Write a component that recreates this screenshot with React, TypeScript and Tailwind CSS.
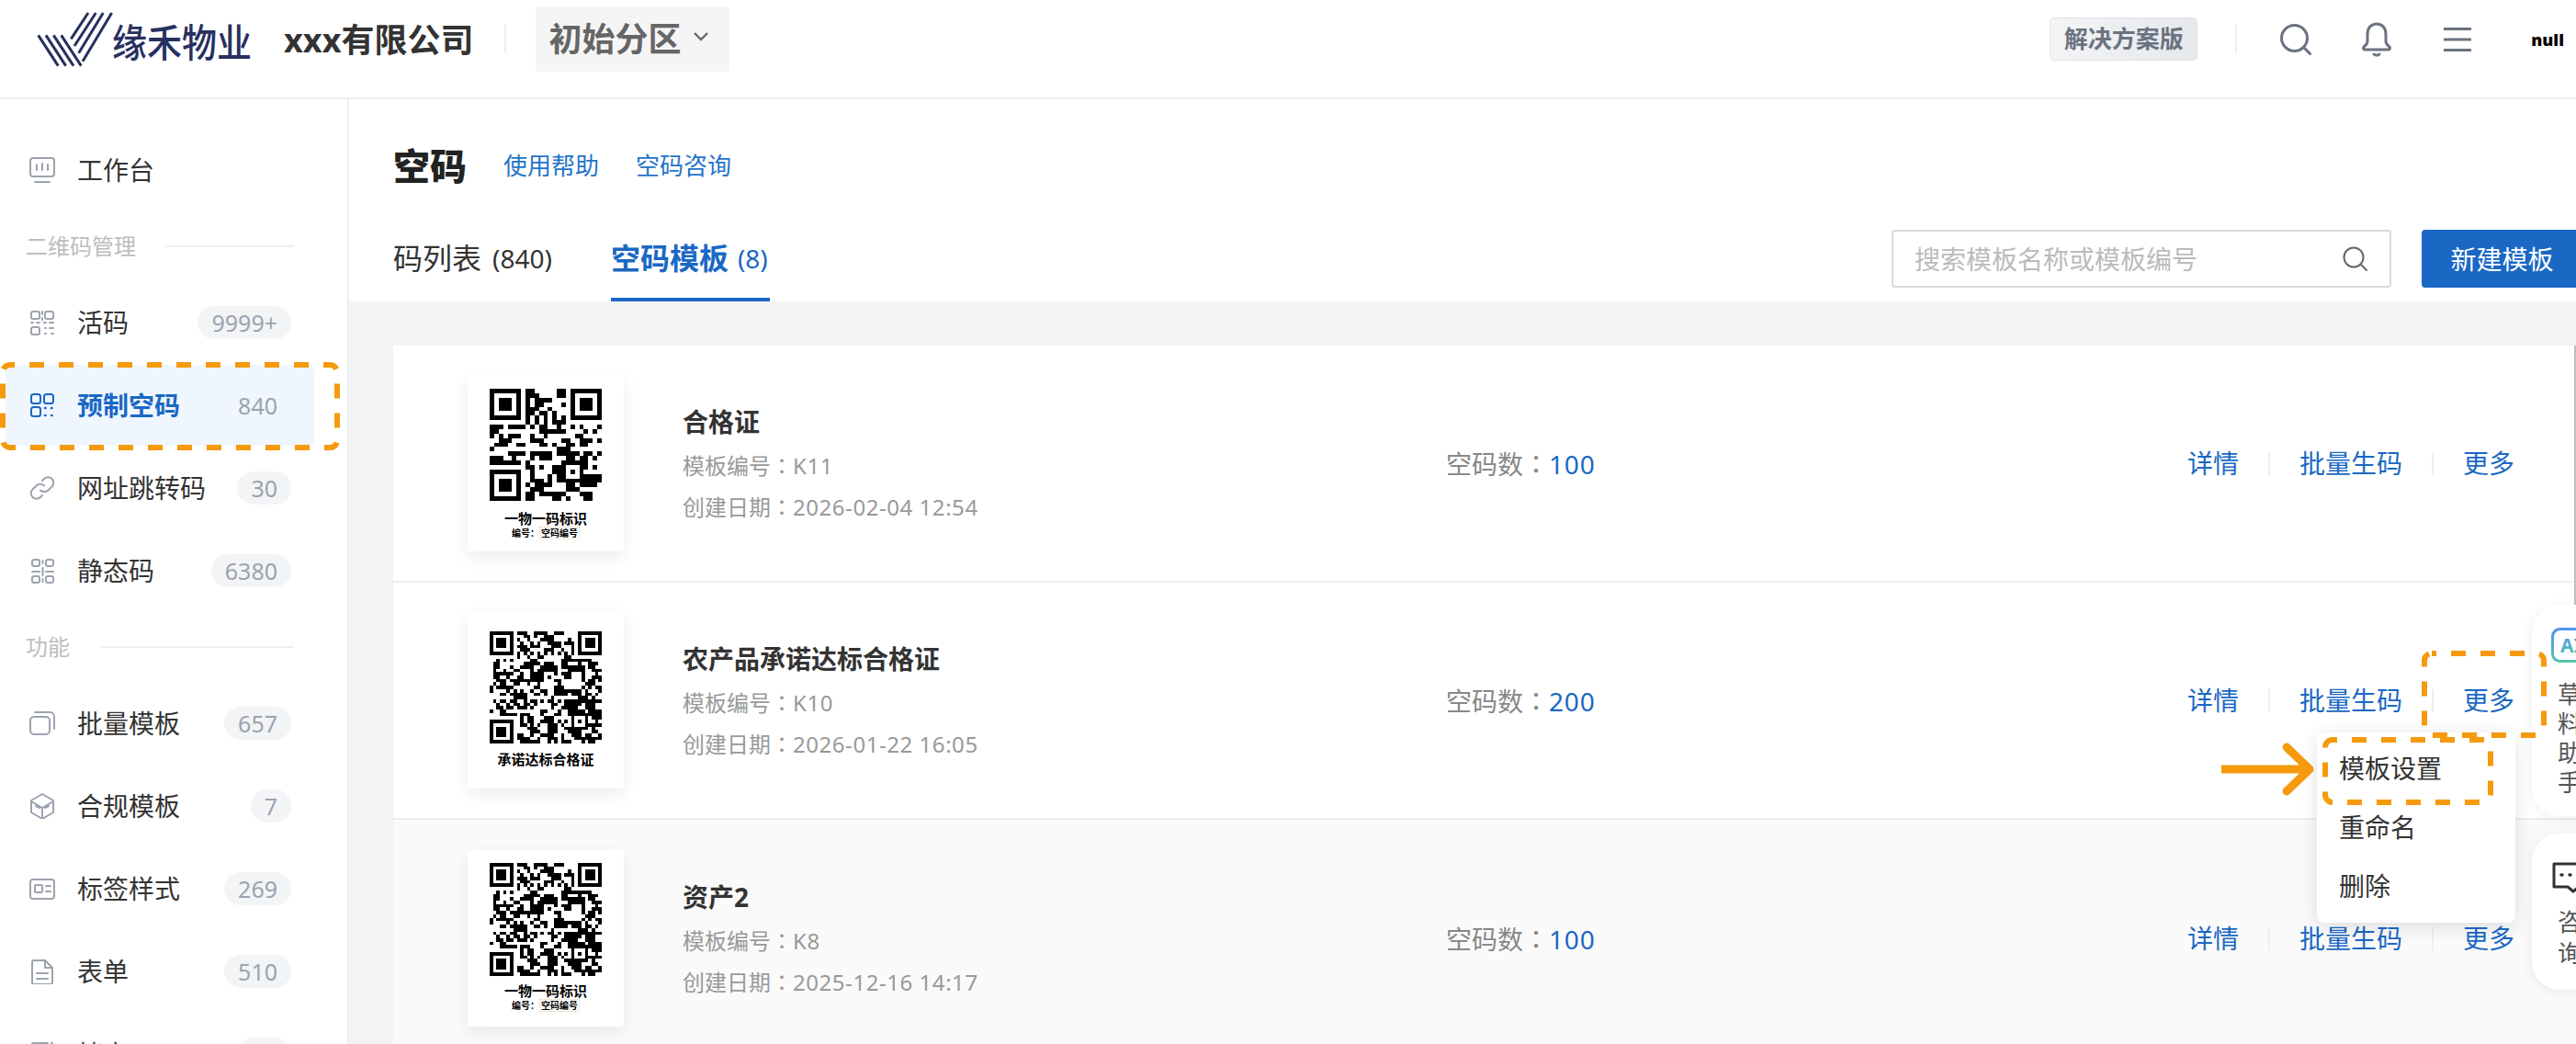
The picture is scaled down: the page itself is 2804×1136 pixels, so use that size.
import React from "react";

const ORANGE = "#f59a0c";

function qrPath(size: number, seed: number) {
  let s = seed >>> 0;
  const rnd = () => {
    s = (s + 0x6d2b79f5) >>> 0;
    let t = s;
    t = Math.imul(t ^ (t >>> 15), t | 1);
    t ^= t + Math.imul(t ^ (t >>> 7), t | 61);
    return ((t ^ (t >>> 14)) >>> 0) / 4294967296;
  };
  const g: number[][] = [];
  for (let y = 0; y < size; y++) {
    g.push([]);
    for (let x = 0; x < size; x++) {
      const prevA = x > 0 ? g[y][x - 1] : 0;
      const prevB = y > 0 ? g[y - 1][x] : 0;
      g[y].push(rnd() < 0.38 + 0.12 * (prevA + prevB) ? 1 : 0);
    }
  }
  const square = (ox: number, oy: number, n: number) => {
    for (let y = 0; y < n; y++)
      for (let x = 0; x < n; x++) {
        const ring = Math.min(x, y, n - 1 - x, n - 1 - y);
        g[oy + y][ox + x] = ring === 1 ? 0 : 1;
      }
  };
  const clear = (ox: number, oy: number, w: number, h: number) => {
    for (let y = oy; y < oy + h; y++)
      for (let x = ox; x < ox + w; x++) if (g[y] && g[y][x] !== undefined) g[y][x] = 0;
  };
  clear(0, 0, 8, 8);
  clear(size - 8, 0, 8, 8);
  clear(0, size - 8, 8, 8);
  square(0, 0, 7);
  square(size - 7, 0, 7);
  square(0, size - 7, 7);
  square(size - 9, size - 9, 5);
  for (let i = 8; i < size - 8; i++) {
    g[6][i] = i % 2 === 0 ? 1 : 0;
    g[i][6] = i % 2 === 0 ? 1 : 0;
  }
  let d = "";
  g.forEach((row, y) =>
    row.forEach((v, x) => {
      if (v) d += `M${x} ${y}h1v1h-1z`;
    })
  );
  return d;
}

const QR_A = qrPath(25, 77);
const QR_B = qrPath(33, 2026);

function Qr({ d, n, h }: { d: string; n: number; h: number }) {
  return (
    <svg viewBox={`0 0 ${n} ${n}`} width={122} height={h} preserveAspectRatio="none" shapeRendering="crispEdges" className="block shrink-0">
      <path d={d} fill="#000" />
    </svg>
  );
}

function Ico({ children, color = "#9ca3af" }: { children: React.ReactNode; color?: string }) {
  return (
    <svg viewBox="0 0 28 28" width={28} height={28} fill="none" stroke={color} strokeWidth={2} strokeLinecap="round" strokeLinejoin="round" className="shrink-0">
      {children}
    </svg>
  );
}

const icons: Record<string, React.ReactNode> = {
  desk: (
    <>
      <rect x="1" y="1" width="26" height="20" rx="3" />
      <path d="M8 8v6M14 7v7M20 8v6M6 27h16" />
    </>
  ),
  live: (
    <>
      <rect x="2" y="2" width="9" height="8" rx="2" />
      <rect x="17" y="2" width="9" height="8" rx="2" />
      <rect x="2" y="19" width="9" height="8" rx="2" />
      <path d="M2 14h2M8 14h3M16 14h2M22 14h4M17 20h1M22 20h4M17 26h1M24 26h2M14 2v3M14 9v2" />
    </>
  ),
  pre: (
    <>
      <rect x="2" y="2" width="10" height="10" rx="2.5" />
      <rect x="16" y="2" width="10" height="10" rx="2.5" />
      <rect x="2" y="16" width="10" height="10" rx="2.5" />
      <path d="M17 17h.5M24 17h.5M17 25h.5M24 25h.5" strokeWidth={2.6} />
    </>
  ),
  link: (
    <>
      <path d="M12 16.5a6 6 0 0 0 8.5 0l4-4a6 6 0 0 0-8.5-8.500l-2 2" />
      <path d="M16 11.500a6 6 0 0 0-8.500 0l-4 4a6 6 0 0 0 8.500 8.500l2-2" />
    </>
  ),
  stat: (
    <>
      <rect x="3" y="2" width="8" height="7" rx="2" />
      <rect x="18" y="2" width="8" height="7" rx="2" />
      <rect x="3" y="20" width="8" height="7" rx="2" />
      <rect x="18" y="20" width="8" height="7" rx="2" />
      <path d="M14.500 11v8M3 15h8M18 15h8M14.500 3v3M14.500 23v3" />
    </>
  ),
  batch: (
    <>
      <rect x="1" y="7" width="21" height="19" rx="4" />
      <path d="M6 2h16a5 5 0 0 1 5 5v13" />
    </>
  ),
  box: (
    <>
      <path d="M14 1 26 8v13l-12 7-12-7V8z" />
      <path d="M2 9l12 7 12-7M14 16v11M7 14l4 2M21 14l-4 2" />
    </>
  ),
  label: (
    <>
      <rect x="1" y="4" width="26" height="21" rx="3" />
      <rect x="6" y="10" width="8" height="8" rx="1" />
      <path d="M18 11h5M18 17h5" />
    </>
  ),
  form: (
    <>
      <path d="M5 2h12l8 8v16a2 2 0 0 1-2 2H5a2 2 0 0 1-2-2V4a2 2 0 0 1 2-2z" />
      <path d="M17 2v8h8M8 16h12M8 22h12" />
    </>
  ),
  file: (
    <>
      <path d="M20 2H5a3 3 0 0 0-3 3v18a3 3 0 0 0 3 3h18a3 3 0 0 0 3-3V9" />
      <path d="M24 2h1" />
    </>
  ),
};

function Colon() {
  return <span className="font-['Noto_Sans_CJK_TC',sans-serif]">：</span>;
}

function Badge({ v, active }: { v: string; active?: boolean }) {
  return (
    <span className={`ml-auto h-[36px] rounded-full px-[15px] text-[25px] leading-[36px] text-[#9ca3af] ${active ? "" : "bg-[#f3f4f6]"}`}>{v}</span>
  );
}

function NavItem({ icon, label, count, active }: { icon: string; label: string; count?: string; active?: boolean }) {
  return (
    <div className="h-[90px] shrink-0 py-px pl-[6px]">
      <div className={`flex h-[88px] w-[336px] items-center rounded-[6px] pl-[26px] pr-[25px] ${active ? "bg-[#eff6fe]" : ""}`}>
        <Ico color={active ? "#1a68c4" : "#9ca3af"}>{icons[icon]}</Ico>
        <span className={`ml-[24px] text-[28px] leading-[40px] whitespace-nowrap ${active ? "font-bold text-[#1a68c4]" : "text-[#333333]"}`}>{label}</span>
        {count ? <Badge v={count} active={active} /> : null}
      </div>
    </div>
  );
}

function Section({ title }: { title: string }) {
  return (
    <div className="flex h-[76px] shrink-0 items-center pl-[28px] pr-[58px]">
      <span className="text-[24px] leading-[34px] text-[#bdbdbd]">{title}</span>
      <span className="ml-[32px] h-[2px] flex-1 bg-[#f0f0f2]" />
    </div>
  );
}

function Sep() {
  return <span className="mx-[32px] h-[25px] w-[2px] bg-[#eeeeee]" />;
}

function Row({
  title,
  code,
  date,
  count,
  qr,
  hover,
  last,
}: {
  title: string;
  code: string;
  date: string;
  count: string;
  qr: "one" | "two" | "three";
  hover?: boolean;
  last?: boolean;
}) {
  return (
    <div className={`flex h-[258px] shrink-0 items-center pl-[81px] pr-[67px] ${hover ? "bg-[#fafafa]" : "bg-white"} ${last ? "" : "border-b-2 border-[#eeeeee]"}`}>
      <div className={`flex h-[192px] w-[170px] shrink-0 flex-col items-center rounded-[4px] bg-white text-black shadow-[0_6px_18px_rgba(0,0,0,0.08)] ${qr === "two" ? "pt-[21px]" : qr === "one" ? "pt-[15px]" : "pt-[14px]"}`}>
        <Qr d={qr === "one" ? QR_A : QR_B} n={qr === "one" ? 25 : 33} h={qr === "three" ? 123 : 122} />
        {qr === "two" ? (
          <div className="mt-[8px] text-[15px] font-bold leading-[18px] whitespace-nowrap">承诺达标合格证</div>
        ) : (
          <>
            <div className={`${qr === "one" ? "mt-[10px]" : "mt-[7px]"} text-[15px] font-bold leading-[18px] whitespace-nowrap`}>一物一码标识</div>
            <div className="flex items-center text-[10px] font-bold leading-[14px] whitespace-nowrap">
              编号：<span className="border border-dotted border-[#e8c9a8] px-[1px] leading-[12px]">空码编号</span>
            </div>
          </>
        )}
      </div>
      <div className="ml-[64px] w-[831px] shrink-0 pt-[5px]">
        <div className="text-[28px] font-bold leading-[40px] text-[#333333]">{title}</div>
        <div className="mt-[5px] text-[24px] leading-[44px] text-[#999999]">
          模板编号<Colon /><span className="tracking-[0.55px]">{code}</span>
        </div>
        <div className="text-[24px] leading-[44px] text-[#999999]">
          创建日期<Colon /><span className="tracking-[0.55px]">{date}</span>
        </div>
      </div>
      <div className="text-[28px] leading-[40px] text-[#888888]">
        空码数<Colon /><span className="tracking-[0.8px] text-[#1a68c4]">{count}</span>
      </div>
      <div className="ml-auto flex items-center text-[28px] leading-[40px] text-[#1a68c4]">
        <span>详情</span>
        <Sep />
        <span>批量生码</span>
        <Sep />
        <span>更多</span>
      </div>
    </div>
  );
}

function Dash({ w, h, className, offset }: { w: number; h: number; className: string; offset: number }) {
  return (
    <svg width={w} height={h} className={`absolute ${className}`} fill="none">
      <rect x="3" y="3" width={w - 6} height={h - 6} rx="8" stroke={ORANGE} strokeWidth="6" strokeDasharray="16 16" strokeDashoffset={offset} />
    </svg>
  );
}

export default function App() {
  return (
    <div className="relative flex h-[1136px] w-[2804px] flex-col overflow-hidden bg-white font-['Noto_Sans','Noto_Sans_CJK_SC',sans-serif]">
      {/* top bar */}
      <header className="flex h-[108px] shrink-0 items-start border-b-2 border-[#f0f0f0] pl-[40px]">
        <svg viewBox="0 0 285 240" width={95} height={80} className="mt-[5px] shrink-0" fill="none" stroke="#27305f" strokeWidth="9">
          <path d="M5 100l65 100M30 100l65 100M55 100l65 100M80 100l65 100" />
          <path d="M112 112l56-85M123 135l70-108M137 158l80-131M150 185l95-158" />
        </svg>
        <span className="-ml-[13px] mt-[21px] scale-y-110 text-[38px] font-medium leading-[48px] text-[#27305f] whitespace-nowrap">缘禾物业</span>
        <span className="ml-[35px] mt-[20px] text-[36px] font-bold leading-[48px] text-[#333333] whitespace-nowrap">xxx有限公司</span>
        <span className="ml-[34px] mt-[27px] h-[31px] w-[2px] bg-[#eeeeee]" />
        <div className="ml-[32px] mt-[7px] flex h-[71px] w-[211px] items-center rounded-[4px] bg-[#f5f5f5] pl-[14px]">
          <span className="text-[36px] font-bold leading-[48px] text-[#666666] whitespace-nowrap">初始分区</span>
          <svg width="18" height="12" viewBox="0 0 18 12" fill="none" stroke="#666" strokeWidth="2.4" className="ml-[13px] -mt-[6px]">
            <path d="M2 2l7 7 7-7" />
          </svg>
        </div>
        <div className="ml-auto mt-[19px] flex h-[47px] w-[161px] items-center justify-center rounded-[5px] border border-[#e0e2e6] bg-gradient-to-r from-[#f3f4f6] to-[#e6e8ec] text-[26px] font-bold text-[#6b7280] whitespace-nowrap">
          解决方案版
        </div>
        <span className="ml-[41px] mt-[27px] h-[31px] w-[2px] bg-[#eeeeee]" />
        <svg width="34" height="34" viewBox="0 0 34 34" fill="none" stroke="#6b7280" strokeWidth="3" className="ml-[47px] mt-[26px] shrink-0" strokeLinecap="round">
          <circle cx="15.500" cy="15.500" r="14" />
          <path d="M25.500 25.500l7 7" />
        </svg>
        <svg width="34" height="38" viewBox="0 0 34 38" fill="none" stroke="#6b7280" strokeWidth="3" className="ml-[54px] mt-[24px] shrink-0" strokeLinecap="round" strokeLinejoin="round">
          <path d="M17 2c-6 0-10 4.500-10 11v8c0 3-2 4.500-4 6-1 1-.5 3 1 3h26c1.500 0 2-2 1-3-2-1.500-4-3-4-6v-8c0-6.500-4-11-10-11z" />
          <path d="M14 35c1 1.500 5 1.500 6 0" />
        </svg>
        <svg width="30" height="26" viewBox="0 0 30 26" fill="none" stroke="#6b7280" strokeWidth="3" className="ml-[56px] mt-[30px] shrink-0">
          <path d="M0 1.500h30M0 13h30M0 24.500h30" />
        </svg>
        <span className="ml-[65px] mr-[13px] mt-[31px] text-[18px] font-black leading-[24px] text-black">null</span>
      </header>

      <div className="flex min-h-0 flex-1">
        {/* sidebar */}
        <aside className="flex w-[380px] shrink-0 flex-col border-r-2 border-[#f0f0f0] bg-white pt-[32px]">
          <NavItem icon="desk" label="工作台" />
          <Section title="二维码管理" />
          <NavItem icon="live" label="活码" count="9999+" />
          <NavItem icon="pre" label="预制空码" count="840" active />
          <NavItem icon="link" label="网址跳转码" count="30" />
          <NavItem icon="stat" label="静态码" count="6380" />
          <Section title="功能" />
          <NavItem icon="batch" label="批量模板" count="657" />
          <NavItem icon="box" label="合规模板" count="7" />
          <NavItem icon="label" label="标签样式" count="269" />
          <NavItem icon="form" label="表单" count="510" />
          <NavItem icon="file" label="档案" count="12" />
        </aside>

        {/* main */}
        <main className="flex min-w-0 flex-1 flex-col bg-[#f2f3f5]">
          <div className="h-[220px] shrink-0 bg-white pl-[48px]">
            <div className="flex h-[142px] items-center gap-[40px] pt-[4px]">
              <h1 className="text-[40px] font-black leading-[56px] text-[#222222]">空码</h1>
              <div className="-mt-[2px] flex gap-[40px] text-[26px] leading-[36px] text-[#1f74c9]">
                <span>使用帮助</span>
                <span>空码咨询</span>
              </div>
            </div>
            <div className="flex h-[78px] items-start">
              <div className="flex h-full items-center pb-[16px] text-[32px] leading-[44px] text-[#333333] whitespace-nowrap">
                码列表<span className="ml-[12px] text-[28px]">(840)</span>
              </div>
              <div className="ml-[64px] flex h-full items-center border-b-4 border-[#1a68c4] pb-[12px] text-[32px] font-bold leading-[44px] text-[#1a68c4] whitespace-nowrap">
                空码模板<span className="ml-[10px] mr-[2px] text-[28px] font-normal">(8)</span>
              </div>
              <div className="ml-auto flex h-[63px] w-[544px] items-center rounded-[4px] border-2 border-[#d9d9d9] bg-white pl-[23px] pr-[24px]">
                <span className="text-[28px] text-[#bbbbbb] whitespace-nowrap">搜索模板名称或模板编号</span>
                <svg width="27" height="27" viewBox="0 0 27 27" fill="none" stroke="#666" strokeWidth="2" className="ml-auto" strokeLinecap="round">
                  <circle cx="12" cy="12" r="10.500" />
                  <path d="M20 20l6 6" />
                </svg>
              </div>
              <div className="ml-[33px] -mr-[7px] flex h-[63px] w-[175px] shrink-0 items-center justify-center rounded-[4px] bg-[#1a68c4] text-[28px] text-white whitespace-nowrap">
                新建模板
              </div>
            </div>
          </div>
          <div className="flex min-h-0 flex-1 flex-col pl-[48px] pt-[48px]">
            <Row title="合格证" code="K11" date="2026-02-04 12:54" count="100" qr="one" />
            <Row title="农产品承诺达标合格证" code="K10" date="2026-01-22 16:05" count="200" qr="two" />
            <Row title="资产2" code="K8" date="2025-12-16 14:17" count="100" qr="three" hover last />
          </div>
        </main>
      </div>

      {/* scrollbar */}
      <span className="absolute left-[2802px] top-[376px] h-[282px] w-[2px] bg-[#bdbdbd]" />

      {/* floating helpers */}
      <div className="absolute left-[2756px] top-[658px] h-[230px] w-[90px] rounded-[30px] bg-white pl-[21px] pt-[25px] shadow-[0_2px_14px_rgba(0,0,0,0.07)]">
        <svg width="60" height="38" viewBox="0 0 60 38" fill="none" className="block">
          <defs>
            <linearGradient id="ai" x1="0" y1="0" x2="0.4" y2="1">
              <stop offset="0" stopColor="#4f8ff7" />
              <stop offset="1" stopColor="#55c9a6" />
            </linearGradient>
          </defs>
          <rect x="1.500" y="1.500" width="56" height="35" rx="8" stroke="url(#ai)" strokeWidth="3" />
          <text x="10" y="27" fontSize="21" fontWeight="700" fill="url(#ai)" fontFamily="Noto Sans">AI</text>
        </svg>
        <div className="ml-[7px] mt-[18px] w-[26px] text-[26px] leading-[32px] text-[#555555]">草料助手</div>
      </div>
      <div className="absolute left-[2756px] top-[907px] h-[170px] w-[90px] rounded-[30px] bg-white pl-[22px] pt-[31px] shadow-[0_2px_14px_rgba(0,0,0,0.07)]">
        <svg width="44" height="34" viewBox="0 0 44 34" fill="none" stroke="#333" strokeWidth="3" strokeLinejoin="round" className="block">
          <path d="M2 2h40v25H29l-6 5-6-5H2z" />
          <path d="M10 14h1M19 14h1M28 14h1" strokeLinecap="round" strokeWidth="3.500" />
        </svg>
        <div className="ml-[6px] mt-[14px] w-[26px] text-[26px] leading-[34px] text-[#555555]">咨询</div>
      </div>

      {/* dropdown */}
      <div className="absolute left-[2522px] top-[797px] flex h-[207px] w-[216px] flex-col rounded-[8px] bg-white pl-[24px] pt-[7px] text-[28px] leading-[64px] text-[#333333] shadow-[0_4px_20px_rgba(0,0,0,0.12)]">
        <span>模板设置</span>
        <span>重命名</span>
        <span>删除</span>
      </div>

      {/* annotations */}
      <Dash w={370} h={96} className="left-0 top-[394px]" offset={11} />
      <Dash w={136} h={95} className="left-[2636px] top-[708px]" offset={11} />
      <Dash w={186} h={74} className="left-[2528px] top-[802px]" offset={11} />
      <svg width="104" height="62" viewBox="0 0 104 62" fill="none" stroke={ORANGE} className="absolute left-[2418px] top-[806px]">
        <path d="M0 31h94" strokeWidth="9" />
        <path d="M71 7l25 24-25 24" strokeWidth="9" strokeLinecap="round" strokeLinejoin="round" />
      </svg>
    </div>
  );
}
